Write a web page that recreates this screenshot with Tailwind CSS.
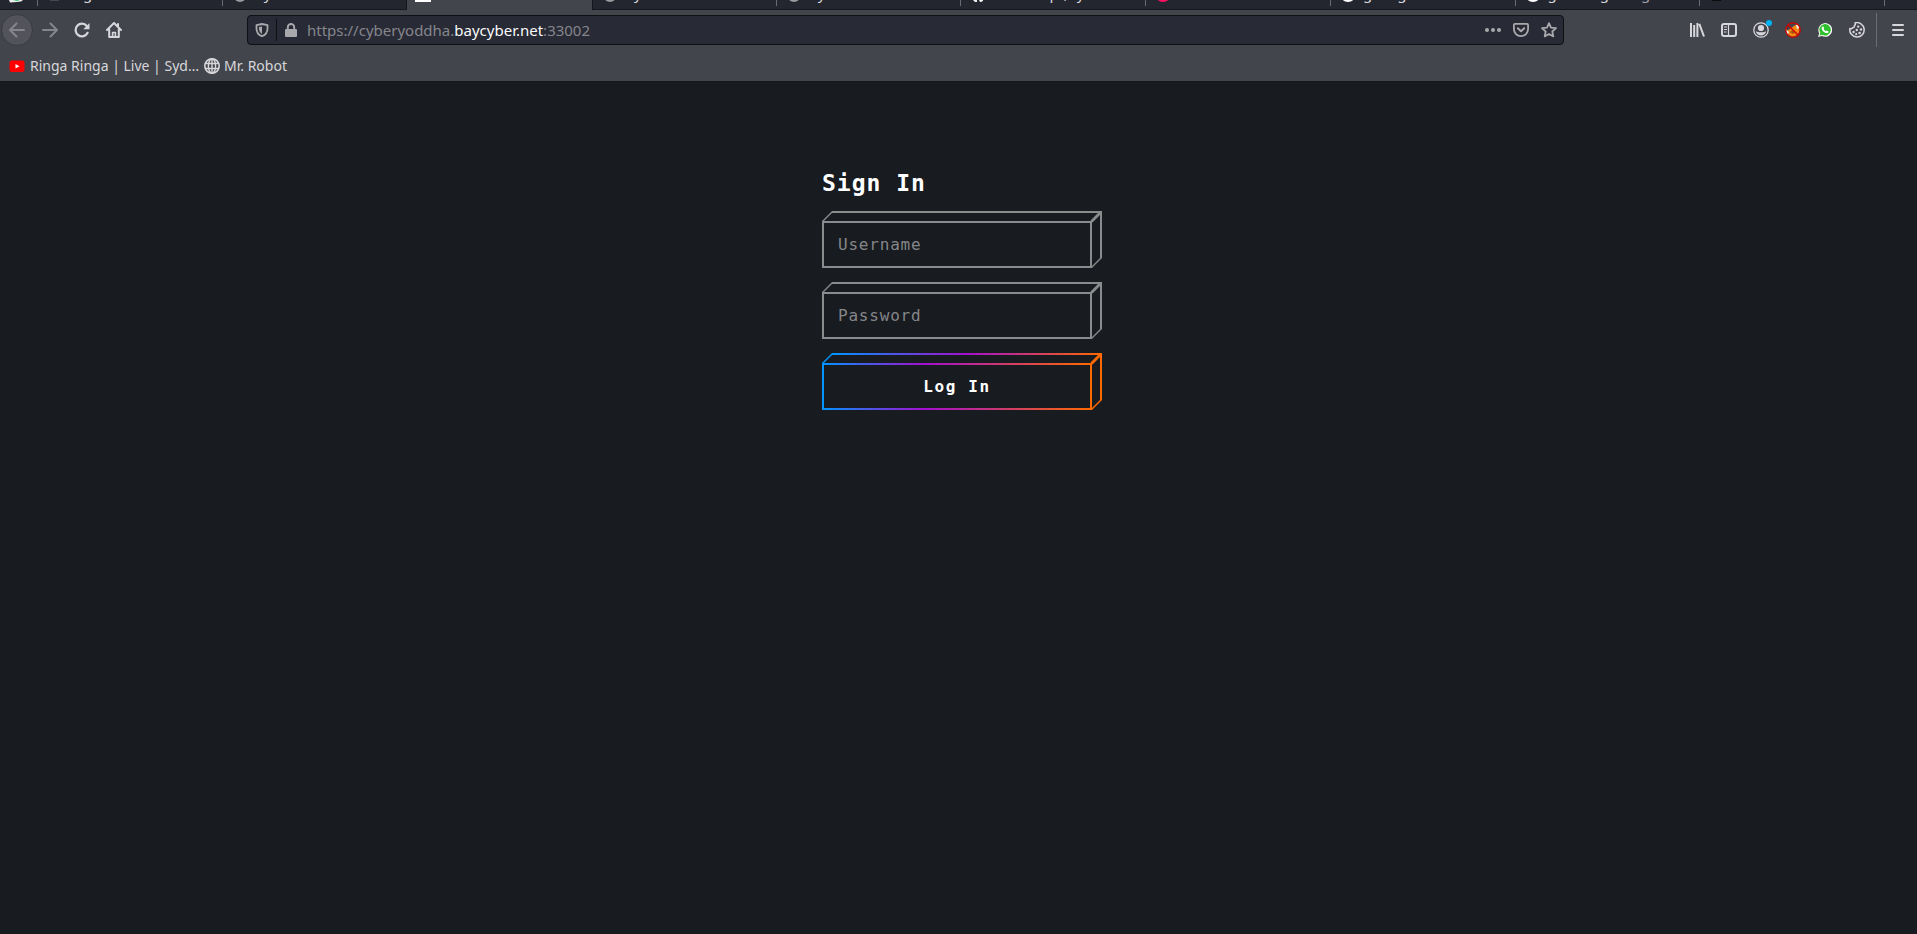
<!DOCTYPE html>
<html lang="en">
<head>
<meta charset="utf-8">
<title>Sign In</title>
<script src="https://cdn.jsdelivr.net/npm/@tailwindcss/browser@4"></script>
</head>
<body class="flex min-h-screen flex-col bg-[#181b1f] font-['Noto_Sans',sans-serif] text-[15px] text-[#d7d7db]">
<header class="border-b border-[#15171b] bg-[#43454c]">
  <!-- Lower edge of the tab strip -->
  <nav aria-label="Tabs" class="grid h-[10px] grid-cols-[38px_repeat(10,minmax(0,1fr))_32px] overflow-hidden leading-none text-[#d7d7db]">
    <div class="flex border-b border-[#15171f] bg-[#23252f] pl-2">
      <svg class="h-[3px] w-4" viewBox="0 0 16 3"><path d="M1 0h14l-2 1.5-4 .5-7 .5z" fill="#eee"/><path d="M5 0h7l-3 1z" fill="#2fc66a"/></svg>
      <span class="ml-auto h-[6px] w-px bg-[#696b72]"></span>
    </div>
    <div class="flex border-b border-[#15171f] bg-[#23252f] pl-3">
      <span class="h-px w-[9px] bg-[#44464e]"></span><span class="-mt-[14px] ml-6">g</span>
      <span class="ml-auto h-[6px] w-px bg-[#696b72]"></span>
    </div>
    <div class="flex border-b border-r border-[#15171f] bg-[#23252f] pl-[11px]">
      <span class="-mt-[10px] size-3 rounded-full bg-[#9a9b9e]"></span><span class="-mt-[14px] ml-[18px]">y</span>
    </div>
    <div class="flex pl-2"><span class="h-[2px] w-4 bg-white"></span></div>
    <div class="flex border-b border-l border-[#15171f] bg-[#23252f] pl-[11px]">
      <span class="-mt-[10px] size-3 rounded-full bg-[#9a9b9e]"></span><span class="-mt-[14px] ml-[18px]">y</span>
      <span class="ml-auto h-[6px] w-px bg-[#696b72]"></span>
    </div>
    <div class="flex border-b border-[#15171f] bg-[#23252f] pl-[11px]">
      <span class="-mt-[10px] size-3 rounded-full bg-[#9a9b9e]"></span><span class="-mt-[14px] ml-[18px]">y</span>
      <span class="ml-auto h-[6px] w-px bg-[#696b72]"></span>
    </div>
    <div class="flex border-b border-[#15171f] bg-[#23252f] pl-3">
      <svg class="h-[2px] w-[10px]" viewBox="0 0 10 2"><path d="M0 0h4v2H2zM6 0h4v1l-2 1H7z" fill="#eee"/></svg>
      <span class="-mt-[14px] ml-[66px]">p</span><span class="-mt-[14px] ml-[5px]">,</span><span class="-mt-[14px] ml-[9px]">y</span>
      <span class="ml-auto h-[6px] w-px bg-[#696b72]"></span>
    </div>
    <div class="flex border-b border-[#15171f] bg-[#23252f] pl-[9px]">
      <span class="-mt-[14px] size-4 rounded-full bg-[#ff0f5f]"></span>
      <span class="ml-auto h-[6px] w-px bg-[#696b72]"></span>
    </div>
    <div class="flex border-b border-[#15171f] bg-[#23252f] pl-[9px]">
      <span class="-mt-[14px] size-4 rounded-full bg-white"></span><span class="-mt-[14px] ml-[7px]">g</span><span class="-mt-[14px] ml-[25px]">g</span>
      <span class="ml-auto h-[6px] w-px bg-[#696b72]"></span>
    </div>
    <div class="flex border-b border-[#15171f] bg-[#23252f] pl-[9px]">
      <span class="-mt-[14px] size-4 rounded-full bg-white"></span><span class="-mt-[14px] ml-[7px]">g</span><span class="-mt-[14px] ml-[43px]">g</span><span class="-mt-[14px] ml-[32px] text-[#a0a1a6]">g</span>
      <span class="ml-auto h-[6px] w-px bg-[#696b72]"></span>
    </div>
    <div class="flex border-b border-[#15171f] bg-[#23252f] pl-3">
      <span class="h-px w-[9px] bg-[#0c0c10]"></span>
      <span class="ml-auto h-[6px] w-px bg-[#696b72]"></span>
    </div>
    <div class="border-b border-[#15171f] bg-[#23252f]"></div>
  </nav>

  <div class="flex h-10 items-center">
    <div class="flex w-[247px] shrink-0 items-center">
      <button aria-label="Back" class="mx-px flex size-8 items-center justify-center rounded-full border border-[#3a3b42] bg-[#53545b] text-[#85868b]">
        <svg class="size-4" viewBox="0 0 16 16" fill="none" stroke="currentColor" stroke-width="2" stroke-linecap="round" stroke-linejoin="round"><path d="M15 8H1.500M7.500 1.500L1 8l6.500 6.500"/></svg>
      </button>
      <button aria-label="Forward" class="flex size-8 items-center justify-center text-[#85868b]">
        <svg class="size-4" viewBox="0 0 16 16" fill="none" stroke="currentColor" stroke-width="2" stroke-linecap="round" stroke-linejoin="round"><path d="M1 8h13.500M8.500 1.500L15 8l-6.500 6.500"/></svg>
      </button>
      <button aria-label="Reload" class="flex size-8 items-center justify-center">
        <svg class="size-4" viewBox="0 0 16 16"><path d="M13.600 10.800A6.300 6.300 0 1 1 12.800 4" fill="none" stroke="currentColor" stroke-width="2.200" stroke-linecap="round"/><path d="M15.500 1v6.200h-6.200z" fill="currentColor"/></svg>
      </button>
      <button aria-label="Home" class="flex size-8 items-center justify-center">
        <svg class="size-4" viewBox="0 0 16 16" fill="none" stroke="currentColor" stroke-width="2" stroke-linecap="round" stroke-linejoin="round"><path d="M1 8l7-7 7 7M3.200 7.500V15h9.600V7.500M12 2v2"/><path d="M6.600 15v-4.500h2.800V15" stroke-width="1.600"/></svg>
      </button>
    </div>
    <div class="flex h-[30px] flex-1 items-center rounded border border-[#0f1014] bg-[#282a35] text-[#a9a9ad]">
      <button aria-label="Tracking protection" class="flex w-7 items-center justify-center">
        <svg class="size-[14px]" viewBox="0 0 14 14"><path d="M7 1L12.500 2.200v3.300C12.500 9.500 10.500 12 7 13.200 3.500 12 1.500 9.500 1.500 5.500V2.200z" fill="none" stroke="currentColor" stroke-width="1.800" stroke-linejoin="round"/><path d="M7 3.500v7.300C5 9.800 4 8.200 4 5.500V4.100z" fill="currentColor"/></svg>
      </button>
      <span class="h-[22px] w-px bg-[#0f1014]"></span>
      <button aria-label="Connection secure" class="mr-0.5 flex w-7 items-center justify-center">
        <svg class="h-[14px] w-3" viewBox="0 0 12 14"><rect y="6" width="12" height="8" rx="1" fill="currentColor"/><path d="M2.800 7V4.200a3.200 3.200 0 0 1 6.400 0V7" fill="none" stroke="currentColor" stroke-width="1.900"/></svg>
      </button>
      <a href="#" class="flex-1 whitespace-nowrap text-[#85868c]">https://cyberyoddha.<span class="text-[#f9f9fa]">baycyber.net</span>:33002</a>
      <button aria-label="Page actions" class="flex w-7 justify-center"><svg class="size-4" viewBox="0 0 16 16" fill="currentColor"><circle cx="2" cy="8" r="2"/><circle cx="8" cy="8" r="2"/><circle cx="14" cy="8" r="2"/></svg></button>
      <button aria-label="Save to Pocket" class="flex w-7 justify-center"><svg class="size-4" viewBox="0 0 16 16" fill="none" stroke="currentColor" stroke-linecap="round" stroke-linejoin="round"><path d="M2 1.800h12a1.100 1.100 0 0 1 1.100 1.100V7A7.100 7.100 0 0 1 .9 7V2.900A1.100 1.100 0 0 1 2 1.800z" stroke-width="1.800"/><path d="M4.800 6.300L8 9.300l3.200-3" stroke-width="2"/></svg></button>
      <button aria-label="Bookmark" class="flex w-7 justify-center"><svg class="size-4" viewBox="0 0 16 16" fill="none" stroke="currentColor" stroke-width="1.800" stroke-linejoin="round"><path d="M8 1.100l2 4.500 5 .6-3.700 3.300 1 4.900L8 12l-4.300 2.400 1-4.900L1 6.200l5-.6z"/></svg></button>
    </div>
    <div class="flex w-[353px] shrink-0 items-center justify-end">
      <button aria-label="Library" class="flex w-8 justify-center"><svg class="size-4" viewBox="0 0 16 16" fill="none" stroke="currentColor" stroke-width="2"><path d="M2 1v14M5.200 3v12M8.400 1v14M10.300 1.800L15 14.500"/></svg></button>
      <button aria-label="Sidebars" class="flex w-8 justify-center"><svg class="size-4" viewBox="0 0 16 16" fill="none" stroke="currentColor"><rect x="1" y="2" width="14" height="12" rx="2" stroke-width="2"/><path d="M7.500 2v12" stroke-width="1.200"/><path d="M3 5h3M3 7.500h3M3 10h2.500" stroke-width="1"/></svg></button>
      <button aria-label="Account" class="relative flex w-8 justify-center"><svg class="size-4" viewBox="0 0 16 16"><circle cx="8" cy="8" r="7.200" fill="none" stroke="currentColor" stroke-width="1.300"/><circle cx="8" cy="6" r="3.100" fill="currentColor"/><path d="M2.800 9.500c1.600-.4 1.600.8 5.200.8s3.600-1.200 5.200-.8c-.5 2.200-2.600 4-5.200 4s-4.700-1.800-5.200-4z" fill="currentColor"/></svg><span class="absolute right-[5px] -top-[2px] size-[6px] rounded-full bg-[#00b3f4]"></span></button>
      <button aria-label="FoxyProxy" class="flex w-8 justify-center"><svg class="size-4" viewBox="0 0 16 16"><path d="M2 9l4-3 6-4 2 1 .5 6-2 4-5 2-4-2z" fill="#f08a13"/><path d="M1 7l3 3-1 2-2-1zM11 3l3 0 0 3-2 1z" fill="#eee"/><path d="M5 10l3-2 2 2-2 2z" fill="#a84d0c"/><circle cx="8" cy="8" r="7.200" fill="none" stroke="#d40000" stroke-width="1.300"/><path d="M3 3l10 10" stroke="#d40000" stroke-width="1.400"/></svg></button>
      <button aria-label="WhatsApp" class="flex w-8 justify-center"><svg class="size-[14px]" viewBox="0 0 14 14"><path d="M0 14l1.200-3.700A6.900 6.900 0 1 1 3.900 13z" fill="#f4f4f4"/><path d="M1.500 12.500l.8-2.600a5.700 5.700 0 1 1 1.900 1.800z" fill="#2dc02a"/><path d="M4.300 3.700l1-.3.900 1.900-.6.800c.5 1 1.300 1.700 2.300 2.200l.8-.8 1.900.9c0 1.100-.9 1.800-1.900 1.700C6 9.800 3.600 7.200 3.600 5.200c0-.6.3-1.200.7-1.500z" fill="#fff"/></svg></button>
      <button aria-label="Cookies" class="flex w-8 justify-center"><svg class="size-4" viewBox="0 0 16 16"><path d="M6 .9A7.200 7.200 0 1 1 .9 6.500C2 7 3 6.800 3.400 5.800 4.800 5.800 5.600 5 5.300 3.700 6.500 3 6.600 2 6 .9z" fill="none" stroke="currentColor" stroke-width="1.500" stroke-linejoin="round"/><g fill="currentColor"><circle cx="9.200" cy="4.600" r="1.200"/><circle cx="12" cy="7.500" r="1.200"/><circle cx="7.800" cy="8" r="1.200"/><circle cx="4.600" cy="10" r="1.200"/><circle cx="10.600" cy="11" r="1.300"/><circle cx="7.200" cy="12.200" r="1.100"/></g></svg></button>
      <span class="ml-[3px] h-[34px] w-px bg-[#6b6d73]"></span>
      <button aria-label="Menu" class="flex w-10 justify-center pl-px"><svg class="h-4 w-3" viewBox="0 0 12 16" stroke="currentColor" stroke-width="2" stroke-linecap="round"><path d="M1 3h10M1 8h10M1 13h10"/></svg></button>
    </div>
  </div>

  <nav aria-label="Bookmarks" class="flex h-[31px] items-center gap-[13px] pl-[9px] text-sm">
    <a href="#" class="flex w-[182px] items-center gap-[5px] whitespace-nowrap"><svg class="size-4 shrink-0" viewBox="0 0 16 16"><rect x=".5" y="2.500" width="15" height="11.500" rx="2.500" fill="#f00"/><path d="M6.500 5.900v4.600l4-2.300z" fill="#fff"/></svg>Ringa Ringa | Live | Syd…</a>
    <a href="#" class="flex items-center gap-1"><svg class="size-4" viewBox="0 0 16 16" fill="none" stroke="currentColor" stroke-width="1.400"><circle cx="8" cy="8" r="7.200" stroke-width="1.600"/><ellipse cx="8" cy="8" rx="3.600" ry="7.200"/><path d="M8 1v14M1 5.500h14M1 10.500h14"/></svg>Mr. Robot</a>
  </nav>
</header>

<main class="flex flex-1 justify-center pr-[3px] font-['DejaVu_Sans_Mono',monospace] text-base">
  <form class="w-[270px] pt-[85px]">
    <h1 class="text-[23px] leading-8 font-bold tracking-[1px] text-white">Sign In</h1>
    <div class="mt-3 flex flex-col gap-[14px]">
      <div class="relative pt-[10px]">
        <svg class="pointer-events-none absolute top-0 left-0 h-[57px] w-[280px]" viewBox="0 0 280 57" fill="none" stroke="#8a8b8d"><path d="M1 11h268v45H1zM10 1h269v46" stroke-width="2"/><path d="M.5 10.500L10.500.5M269.500 56.500l10-10" stroke-width="1.400"/><path d="M269.500 10.500l10-10" stroke-width="2.800"/></svg>
        <input type="text" aria-label="Username" placeholder="Username" class="block h-[47px] w-full px-4 tracking-wider text-white outline-none placeholder:text-[#85868a]">
      </div>
      <div class="relative pt-[10px]">
        <svg class="pointer-events-none absolute top-0 left-0 h-[57px] w-[280px]" viewBox="0 0 280 57" fill="none" stroke="#8a8b8d"><path d="M1 11h268v45H1zM10 1h269v46" stroke-width="2"/><path d="M.5 10.500L10.500.5M269.500 56.500l10-10" stroke-width="1.400"/><path d="M269.500 10.500l10-10" stroke-width="2.800"/></svg>
        <input type="password" aria-label="Password" placeholder="Password" class="block h-[47px] w-full px-4 tracking-wider text-white outline-none placeholder:text-[#85868a]">
      </div>
      <div class="relative pt-[10px]">
        <svg class="pointer-events-none absolute top-0 left-0 h-[57px] w-[280px]" viewBox="0 0 280 57" fill="none">
          <defs>
            <linearGradient id="front" gradientUnits="userSpaceOnUse" x1="0" y1="0" x2="270" y2="0"><stop offset="0" stop-color="#0095ff"/><stop offset=".38" stop-color="#a40fd0"/><stop offset="1" stop-color="#ff6a00"/></linearGradient>
            <linearGradient id="lid" gradientUnits="userSpaceOnUse" x1="10" y1="0" x2="280" y2="0"><stop offset="0" stop-color="#0095ff"/><stop offset=".5" stop-color="#a40fd0"/><stop offset="1" stop-color="#ff6a00"/></linearGradient>
          </defs>
          <path d="M1 11h268v45H1z" stroke="url(#front)" stroke-width="2"/>
          <path d="M10 1h269v46" stroke="url(#lid)" stroke-width="2"/>
          <path d="M.5 10.500L10.500.5" stroke="#0095ff" stroke-width="1.400"/><path d="M269.500 56.500l10-10" stroke="#ff6a00" stroke-width="1.400"/><path d="M269.500 10.500l10-10" stroke="#ff6a00" stroke-width="2.800"/>
        </svg>
        <button type="submit" class="block h-[47px] w-full font-bold tracking-widest text-white">Log In</button>
      </div>
    </div>
  </form>
</main>
</body>
</html>
